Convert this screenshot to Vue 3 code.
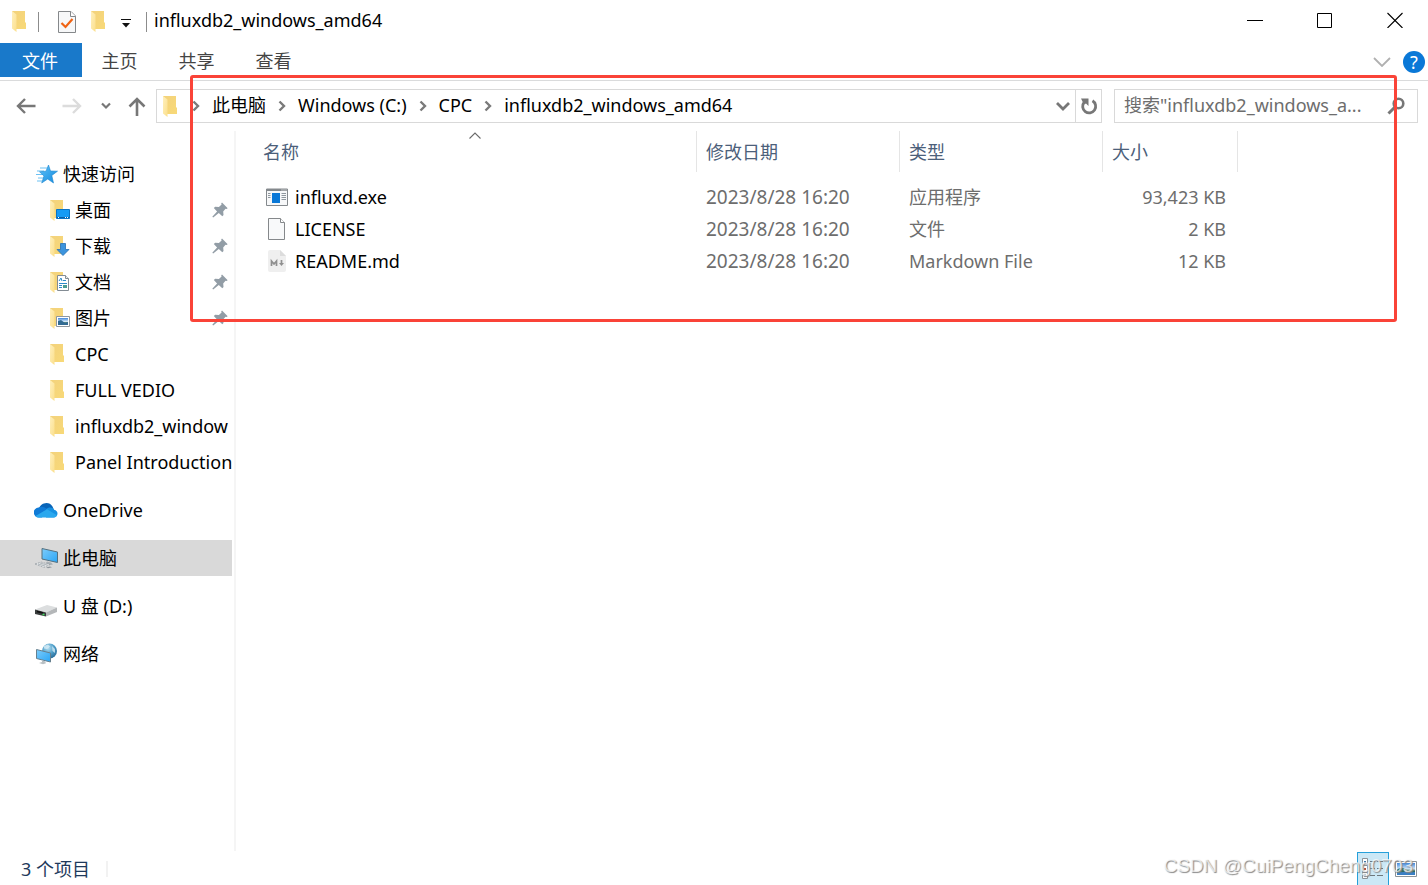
<script setup>
import { ref } from 'vue'

const tabs = ['主页', '共享', '查看']
const crumbs = ['此电脑', 'Windows (C:)', 'CPC', 'influxdb2_windows_amd64']
const quick = [
  { name: '桌面', badge: 'desktop', pinned: true },
  { name: '下载', badge: 'download', pinned: true },
  { name: '文档', badge: 'document', pinned: true },
  { name: '图片', badge: 'picture', pinned: true },
  { name: 'CPC' },
  { name: 'FULL VEDIO' },
  { name: 'influxdb2_window' },
  { name: 'Panel Introduction' }
]
const files = [
  { name: 'influxd.exe', icon: 'exe', date: '2023/8/28 16:20', type: '应用程序', size: '93,423 KB' },
  { name: 'LICENSE', icon: 'file', date: '2023/8/28 16:20', type: '文件', size: '2 KB' },
  { name: 'README.md', icon: 'md', date: '2023/8/28 16:20', type: 'Markdown File', size: '12 KB' }
]
const query = ref('')
</script>

<template>
  <div class="window">
    <svg class="defs" width="0" height="0" aria-hidden="true">
      <defs>
        <linearGradient id="foldBack" x1="0" y1="0" x2="1" y2="1">
          <stop offset="0" stop-color="#f3d27c" />
          <stop offset="1" stop-color="#f8d978" />
        </linearGradient>
        <linearGradient id="foldFront" x1="0" y1="0" x2="1" y2="1">
          <stop offset="0" stop-color="#fff0bd" />
          <stop offset="1" stop-color="#fbdf8c" />
        </linearGradient>
        <linearGradient id="blueScreen" x1="0" y1="0" x2="1" y2="1">
          <stop offset="0" stop-color="#7cccfb" />
          <stop offset="1" stop-color="#2aa5f5" />
        </linearGradient>
        <linearGradient id="starFill" x1="0" y1="0" x2="1" y2="1">
          <stop offset="0" stop-color="#5cc2fa" />
          <stop offset="1" stop-color="#1489dc" />
        </linearGradient>
        <radialGradient id="globeFill" cx="0.4" cy="0.3" r="0.8">
          <stop offset="0" stop-color="#b8e0f2" />
          <stop offset="0.5" stop-color="#4f9fc9" />
          <stop offset="1" stop-color="#1f5f8d" />
        </radialGradient>
        <linearGradient id="photoFill" x1="0" y1="0" x2="0" y2="1">
          <stop offset="0" stop-color="#3f86dc" />
          <stop offset="0.5" stop-color="#d4e8f8" />
          <stop offset="0.6" stop-color="#5f8b78" />
          <stop offset="1" stop-color="#3d78ab" />
        </linearGradient>
        <symbol id="folder" viewBox="0 0 14 21">
          <path d="M0 0h13v11l1 1v6H4L0 16z" fill="url(#foldBack)" />
          <path d="M0 0l4.500 3.500V21L0 17.500z" fill="url(#foldFront)" />
        </symbol>
        <symbol id="crumbArrow" viewBox="0 0 8 12">
          <path d="M1.500 1.500L6 6l-4.500 4.500" fill="none" stroke="#7a7a7a" stroke-width="2.400" />
        </symbol>
      </defs>
    </svg>

    <header class="titlebar">
      <svg class="tb-folder" width="14" height="21"><use href="#folder" /></svg>
      <span class="sep"></span>
      <button class="icon-btn tb-props" aria-label="属性">
        <svg width="18" height="22" viewBox="0 0 18 22">
          <path d="M.5.500h12.500l4.500 4.500v16.500H.5z" fill="#f7f8f9" stroke="#85888b" />
          <path d="M12.500.500v5h5" fill="#fff" stroke="#85888b" />
          <path d="M3.500 12l4 4L14.500 8" fill="none" stroke="#f06414" stroke-width="2.200" />
        </svg>
      </button>
      <button class="icon-btn tb-new" aria-label="新建文件夹">
        <svg width="14" height="21"><use href="#folder" /></svg>
      </button>
      <button class="icon-btn tb-more" aria-label="自定义快速访问工具栏">
        <svg width="10" height="9" viewBox="0 0 10 9">
          <path d="M0 .5h10" stroke="#111" />
          <path d="M1 4h8L5 8.500z" fill="#111" />
        </svg>
      </button>
      <span class="sep"></span>
      <h1 class="title">influxdb2_windows_amd64</h1>
      <div class="win-btns">
        <button class="win-btn" aria-label="最小化">
          <svg width="16" height="16"><path d="M0 8.500h16" stroke="#000" /></svg>
        </button>
        <button class="win-btn" aria-label="最大化">
          <svg width="16" height="16"><path d="M.5 1.500h14v14H.5z" fill="none" stroke="#000" /></svg>
        </button>
        <button class="win-btn close" aria-label="关闭">
          <svg width="16" height="16"><path d="M.5 1l15 15M15.500 1l-15 15" stroke="#000" stroke-width="1.100" /></svg>
        </button>
      </div>
    </header>

    <nav class="ribbon" aria-label="功能区">
      <button class="tab file">文件</button>
      <button v-for="t in tabs" :key="t" class="tab">{{ t }}</button>
      <button class="icon-btn expand" aria-label="展开功能区">
        <svg width="18" height="10" viewBox="0 0 18 10">
          <path d="M1 1l8 8 8-8" fill="none" stroke="#b0b0b0" stroke-width="1.800" />
        </svg>
      </button>
      <button class="help" aria-label="帮助">?</button>
    </nav>

    <div class="navbar">
      <button class="icon-btn nav-wide" aria-label="后退">
        <svg width="20" height="16" viewBox="0 0 20 16">
          <path d="M19.500 8H2M9 1L2 8l7 7" fill="none" stroke="#777" stroke-width="2.400" />
        </svg>
      </button>
      <button class="icon-btn nav-wide" aria-label="前进">
        <svg width="20" height="16" viewBox="0 0 20 16">
          <path d="M.5 8H18M11 1l7 7-7 7" fill="none" stroke="#dcdcdc" stroke-width="2.400" />
        </svg>
      </button>
      <button class="icon-btn nav-recent" aria-label="最近浏览的位置">
        <svg width="10" height="8" viewBox="0 0 10 8">
          <path d="M1 1.500l4 4 4-4" fill="none" stroke="#777" stroke-width="2.200" />
        </svg>
      </button>
      <button class="icon-btn nav-up" aria-label="上移">
        <svg width="18" height="19" viewBox="0 0 18 19">
          <path d="M9 19V2M1.500 9.500L9 2l7.500 7.500" fill="none" stroke="#777" stroke-width="2.600" />
        </svg>
      </button>
      <div class="address">
        <svg class="addr-folder" width="14" height="21"><use href="#folder" /></svg>
        <template v-for="c in crumbs" :key="c">
          <svg class="crumb-arrow" width="8" height="12"><use href="#crumbArrow" /></svg>
          <a class="crumb" href="#">{{ c }}</a>
        </template>
        <button class="icon-btn history" aria-label="以前的位置">
          <svg width="14" height="10" viewBox="0 0 14 10">
            <path d="M1 2L7 8l6-6" fill="none" stroke="#777" stroke-width="2.800" />
          </svg>
        </button>
        <button class="icon-btn refresh" aria-label="刷新">
          <svg width="18" height="18" viewBox="0 0 18 18">
            <path d="M12.500 3.800A6.500 6.500 0 1 1 4.200 5.200" fill="none" stroke="#777" stroke-width="2.800" />
            <path d="M1 1.500h7.500v7.500l-2.500-2.500L4 7.500z" fill="#777" />
          </svg>
        </button>
      </div>
      <form class="search" role="search" @submit.prevent>
        <input v-model="query" type="text" aria-label="搜索" placeholder="搜索&quot;influxdb2_windows_a..." />
        <button class="icon-btn" aria-label="开始搜索">
          <svg width="18" height="18" viewBox="0 0 18 18">
            <circle cx="11.500" cy="6.500" r="4.800" fill="none" stroke="#777" stroke-width="2.600" />
            <path d="M8 10L1.500 16.500" stroke="#777" stroke-width="3" />
          </svg>
        </button>
      </form>
    </div>

    <div class="body">
      <nav class="sidebar" aria-label="导航窗格">
        <a class="item top" href="#">
          <svg width="24" height="20" viewBox="0 0 24 20">
            <path d="M6 4h7M3 7h7M2 10.500h8M4 14h6M3 17h5" stroke="#6cc1f4" stroke-width="1.100" />
            <path d="M14.500 1l2 6 7 .2-5.700 4.300 1.700 7.500-5.800-4-6 4 2.300-7-4.500-4.200 6.500-.6z" fill="url(#starFill)" stroke="#1c86d0" stroke-width=".6" />
          </svg>
          <span>快速访问</span>
        </a>
        <a v-for="q in quick" :key="q.name" class="item sub" href="#">
          <svg width="22" height="21" viewBox="0 0 22 21">
            <path d="M0 0h13v11l1 1v6H4L0 16z" fill="url(#foldBack)" />
            <path d="M0 0l4.500 3.500V21L0 17.500z" fill="url(#foldFront)" />
            <g v-if="q.badge === 'desktop'">
              <path d="M6.500 9.500h13v9h-13z" fill="#169bf5" stroke="#0c74c4" />
              <path d="M7 17.500h12" stroke="#0a5ea6" />
              <path d="M8 17.500h1M15 17.500h1M17 17.500h1" stroke="#fff" />
            </g>
            <g v-else-if="q.badge === 'download'">
              <path d="M10.500 7.500h5v6h3.500L13 19.500 7 13.500h3.500z" fill="#3c94dd" stroke="#2670b4" stroke-width=".8" />
            </g>
            <g v-else-if="q.badge === 'document'">
              <path d="M7.500 3.500h8l3 3v12h-11z" fill="#fff" stroke="#838c94" />
              <path d="M15.500 3.500v3h3" fill="#eee" stroke="#838c94" />
              <path d="M9 9l2-3 1 3M13 8.500h3M9 11.500h8M9 13.500h3M9 15.500h3" fill="none" stroke="#2f8bc9" />
              <path d="M13 13h4v3h-4z" fill="#4b9c92" />
            </g>
            <g v-else-if="q.badge === 'picture'">
              <path d="M6.500 8.500h13v10h-13z" fill="#fff" stroke="#8f979e" />
              <path d="M8 10h10v7H8z" fill="url(#photoFill)" />
              <path d="M8 13l3-1 4 3 3-1v3H8z" fill="#326b93" />
            </g>
          </svg>
          <span class="label">{{ q.name }}</span>
          <svg v-if="q.pinned" class="pin" width="16" height="16" viewBox="0 0 16 16">
            <path d="M10 .5l5.700 5.700-1.200.8-1-.2-2.300 2.600.3 3.600-1.200 1.200-3.500-3.300L1.200 15.500.3 14.700l4.800-5.300L1.800 6l1.400-1.300 3.700.2L9.600 2.600 9.200 1.400z" fill="#929da6" />
          </svg>
        </a>
        <a class="item top spaced" href="#">
          <svg width="24" height="16" viewBox="0 0 24 16">
            <path d="M5 6.500A7.500 7.500 0 0 1 18.500 4.500L20 8 8 10z" fill="#0864b8" />
            <path d="M4.500 5.500C8 3.800 11 5.200 13 7L8 15.500H5A5 5 0 0 1 4.500 5.500z" fill="#0f7ad6" />
            <path d="M12 7.500c2.500-3 7-2.200 8 .2 5 .8 4.500 7.800-.5 7.800H12z" fill="#1791e2" />
            <path d="M1.500 14L13 7.200l10 6c-.8 1.500-2 2.300-3.500 2.300H5.500c-2 0-3-.5-4-1.500z" fill="#2aa8ee" />
          </svg>
          <span>OneDrive</span>
        </a>
        <a class="item top spaced selected" href="#" aria-current="true">
          <svg width="24" height="22" viewBox="0 0 24 22">
            <path d="M8 1.500L23.500 5v10.500L8 12z" fill="url(#blueScreen)" stroke="#55707f" stroke-width="1" />
            <path d="M13 14.500l4 1 2 2-4 .8-4-1z" fill="#a9b0b5" />
            <path d="M1 17l6-2 9 2.500-6 3z" fill="#e3e6e8" stroke="#929a9f" stroke-width=".7" stroke-dasharray="2 1" />
            <path d="M4 17l7 2M6 16l7 2" stroke="#9aa2a8" stroke-width=".7" />
            <path d="M12 20.500l4-1 2 .8-4 1z" fill="#8d959b" />
          </svg>
          <span>此电脑</span>
        </a>
        <a class="item top spaced" href="#">
          <svg class="low" width="24" height="14" viewBox="0 0 24 14">
            <path d="M1 6.500L13 2l10 2.500-11 5z" fill="#dcdedf" />
            <path d="M1 6.500l11 3v4L1 11z" fill="#3a3d3e" />
            <path d="M12 9.500L23 4.500V9l-11 4.500z" fill="#b4b7b9" />
            <path d="M3 8.500l6 1.500" stroke="#111" stroke-width="1.500" />
            <path d="M8.500 11.500h2" stroke="#3ee05c" stroke-width="1.500" />
          </svg>
          <span>U 盘 (D:)</span>
        </a>
        <a class="item top spaced" href="#">
          <svg width="24" height="22" viewBox="0 0 24 22">
            <circle cx="15.500" cy="8" r="7.500" fill="url(#globeFill)" />
            <path d="M10 3l4-1.500 2 2-3 2.500-3-.5zM18 3l3 3v4l-2.500-2z" fill="#d9eef7" opacity=".75" />
            <path d="M2.500 6.500l14 3.500v9l-14-3.500z" fill="url(#blueScreen)" stroke="#66808f" stroke-width="1" />
            <path d="M8 17.500l3 .8 1 2-3 1-4-1.200 3-1z" fill="#b9c0c4" />
          </svg>
          <span>网络</span>
        </a>
      </nav>

      <main class="content">
        <table class="files">
          <colgroup>
            <col class="c-name" /><col class="c-date" /><col class="c-type" /><col class="c-size" /><col />
          </colgroup>
          <thead>
            <tr>
              <th scope="col" aria-sort="ascending">
                名称
                <svg class="sort" width="12" height="7" viewBox="0 0 12 7">
                  <path d="M.5 6.500L6 1l5.500 5.500" fill="none" stroke="#6a6a6a" stroke-width="1.100" />
                </svg>
              </th>
              <th scope="col">修改日期</th>
              <th scope="col">类型</th>
              <th scope="col">大小</th>
              <td></td>
            </tr>
          </thead>
          <tbody>
            <tr v-for="f in files" :key="f.name">
              <td class="name">
                <div class="name-cell">
                  <svg width="22" height="22" viewBox="0 0 22 22">
                    <g v-if="f.icon === 'exe'">
                      <path d="M.5 3h21v16.500H.5z" fill="#f7f8f9" stroke="#84898d" />
                      <path d="M0 4h22" stroke="#84898d" stroke-width="2" />
                      <path d="M15.500 4h1M17.500 4h1M19.500 4h1" stroke="#fff" />
                      <path d="M6 7h8v10H6z" fill="#0a78d7" />
                      <path d="M2 7.500h2.500M2 9.500h2.500M2 11.500h2.500M15.500 7.500H20M15.500 9.500H20M15.500 11.500H20M15.500 13.500H20" stroke="#8f979e" />
                    </g>
                    <g v-else-if="f.icon === 'file'">
                      <path d="M2.500.500h12l4 4v17h-16z" fill="#f8f9fa" stroke="#85888b" />
                      <path d="M14.500.500v4h4" fill="#fff" stroke="#85888b" />
                    </g>
                    <g v-else>
                      <path d="M4 0h10l6 6v14q0 2-2 2H4q-2 0-2-2V2q0-2 2-2z" fill="#efefef" />
                      <path d="M14 0l6 6h-6z" fill="#dcdcdc" />
                      <path d="M5.500 16v-5l2.500 3 2.500-3v5M15.500 10v4" fill="none" stroke="#8f8f8f" stroke-width="1.700" />
                      <path d="M13 13h5l-2.500 3z" fill="#8f8f8f" />
                    </g>
                  </svg>
                  <span>{{ f.name }}</span>
                </div>
              </td>
              <td class="date">{{ f.date }}</td>
              <td>{{ f.type }}</td>
              <td class="size">{{ f.size }}</td>
              <td></td>
            </tr>
          </tbody>
        </table>
      </main>
    </div>

    <footer class="status">
      <span class="count">3 个项目</span>
      <span class="status-sep"></span>
      <button class="view active" aria-label="详细信息" aria-pressed="true">
        <svg width="22" height="22" viewBox="0 0 22 22">
          <path d="M.5.500h5v20h-5zM.5 7.500h5M.5 14.500h5" fill="#fff" stroke="#8b9297" />
          <path d="M2 4h2M2 17.500h2" stroke="#3f78a8" stroke-width="2" />
          <path d="M2 11h2" stroke="#b5533c" stroke-width="2" />
          <path d="M8 3.500h5M15 3.500h6M8 10.500h5M15 10.500h6M8 17.500h5M15 17.500h6" stroke="#6f777c" />
        </svg>
      </button>
      <button class="view" aria-label="大缩略图">
        <svg width="22" height="16" viewBox="0 0 22 16">
          <path d="M.5.500h21v15H.5z" fill="#fff" stroke="#8b9297" />
          <path d="M2 2h18v12H2z" fill="url(#photoFill)" />
          <path d="M2 9c3-3 6-3 9 0l9 1v2H2z" fill="#2f6a5c" />
          <path d="M2 12c6-2 12 0 18-1v3H2z" fill="#3a7fc4" />
        </svg>
      </button>
    </footer>

    <div class="highlight" aria-hidden="true"></div>
    <div class="watermark">CSDN @CuiPengCheng0703</div>
  </div>
</template>

<style>
html,
body {
  margin: 0;
  background: #fff;
}
</style>

<style scoped>
.window {
  position: relative;
  display: flex;
  flex-direction: column;
  height: 100vh;
  overflow: hidden;
  background: #fff;
  color: #000;
  font-family: "Noto Sans", "Noto Sans CJK SC", sans-serif;
  font-size: 18px;
  line-height: 24px;
}
.defs {
  position: absolute;
}
svg {
  display: block;
  flex: none;
}
button {
  padding: 0;
  border: 0;
  background: none;
  color: inherit;
  font: inherit;
}
a {
  color: inherit;
  text-decoration: none;
}
.icon-btn {
  display: flex;
  flex: none;
  align-items: center;
  justify-content: center;
}
.titlebar {
  display: flex;
  align-items: center;
  flex: none;
  height: 43px;
  padding-left: 12px;
}
.sep {
  width: 1px;
  height: 20px;
  margin-left: 12px;
  background: #8c8c8c;
}
.tb-props {
  margin-left: 19px;
}
.tb-new {
  margin-left: 15px;
}
.tb-more {
  margin-left: 16px;
  padding-top: 4px;
}
.tb-more + .sep {
  margin-left: 15px;
}
.title {
  flex: 1;
  margin: 0 0 0 7px;
  font-size: 18px;
  font-weight: 400;
  line-height: 40px;
  height: 43px;
}
.win-btns {
  display: flex;
  height: 40px;
  align-self: flex-start;
}
.win-btn {
  display: flex;
  align-items: center;
  justify-content: center;
  width: 70px;
}
.win-btn.close {
  box-sizing: border-box;
  width: 68px;
  padding-left: 2px;
}
.ribbon {
  display: flex;
  align-items: center;
  flex: none;
  height: 37px;
  padding-right: 3px;
  border-bottom: 1px solid #dadbdc;
  color: #444;
}
.tab {
  box-sizing: border-box;
  width: 77px;
  height: 34px;
  padding: 2px 2px 0 0;
  align-self: flex-start;
}
.tab.file {
  width: 82px;
  background: #1979ca;
  color: #fff;
}
.expand {
  margin-left: auto;
}
.help {
  width: 22px;
  height: 22px;
  margin-left: 12px;
  border-radius: 50%;
  background: #0a78d7;
  color: #fff;
  line-height: 20px;
}
.navbar {
  display: flex;
  align-items: center;
  flex: none;
  height: 50px;
  padding: 0 10px 0 3px;
}
.nav-wide {
  width: 46px;
}
.nav-recent {
  width: 22px;
}
.nav-up {
  width: 39px;
}
.address,
.search {
  box-sizing: border-box;
  display: flex;
  align-items: center;
  height: 34px;
  border: 1px solid #d9d9d9;
}
.address {
  flex: 1;
  padding-left: 6px;
}
.addr-folder {
  margin-right: 3px;
}
.crumb-arrow {
  margin: 0 12px;
}
.crumb {
  padding-bottom: 2px;
}
.history {
  margin-left: auto;
  width: 24px;
}
.refresh {
  width: 26px;
  height: 32px;
  border-left: 1px solid #d9d9d9;
}
.search {
  width: 304px;
  margin-left: 12px;
  padding: 0 12px 0 9px;
}
.search input {
  flex: 1;
  min-width: 0;
  padding: 0 0 2px;
  border: 0;
  outline: 0;
  background: none;
  font: inherit;
}
.search input::placeholder {
  color: #6d6d6d;
  opacity: 1;
}
.body {
  display: flex;
  flex: 1;
  min-height: 0;
}
.sidebar {
  box-sizing: border-box;
  flex: none;
  width: 236px;
  padding: 25px 2px 0 0;
  border-right: 2px solid #f5f5f5;
}
.item {
  display: flex;
  align-items: center;
  height: 36px;
  white-space: nowrap;
}
.item.top {
  padding-left: 34px;
  gap: 5px;
}
.item.sub {
  padding-left: 50px;
  gap: 3px;
}
.item.spaced {
  margin-top: 12px;
}
.item.selected {
  background: #d9d9d9;
}
.low {
  margin-top: 8px;
}
.label {
  flex: 1;
}
.pin {
  margin-right: 4px;
}
.content {
  flex: 1;
  min-width: 0;
}
.files {
  width: 100%;
  border-collapse: separate;
  border-spacing: 0;
  table-layout: fixed;
}
.c-name {
  width: 461px;
}
.c-date,
.c-type {
  width: 203px;
}
.c-size {
  width: 135px;
}
.files th {
  position: relative;
  height: 41px;
  padding: 0 0 0 9px;
  box-sizing: border-box;
  border-right: 1px solid #e5e5e5;
  color: #4c607a;
  font-weight: 400;
  text-align: left;
}
.files th:first-child {
  padding-left: 27px;
}
.sort {
  position: absolute;
  top: 1px;
  left: 50%;
  margin-left: 3px;
}
.files td {
  height: 32px;
  padding: 0 0 0 9px;
  color: #6d6d6d;
}
.files tbody::before {
  content: "";
  display: block;
  height: 9px;
}
.files td.name {
  padding-left: 30px;
  color: #000;
}
.name-cell {
  display: flex;
  align-items: center;
  gap: 7px;
}
.files td.date {
  font-size: 19px;
}
.files td.size {
  padding: 0 12px 0 0;
  text-align: right;
}
.status {
  display: flex;
  align-items: center;
  flex: none;
  height: 33px;
  margin-top: 1px;
  padding: 0 5px 0 21px;
  color: #1e395b;
}
.status-sep {
  width: 2px;
  height: 16px;
  margin: 0 auto 0 16px;
  background: #f2f2f2;
}
.view {
  display: flex;
  align-items: center;
  justify-content: center;
  width: 34px;
  height: 33px;
}
.view.active {
  box-sizing: border-box;
  width: 32px;
  border: 1px solid #26a0da;
  border-bottom: 0;
  background: #cbe8f6;
}
.highlight {
  position: absolute;
  top: 75px;
  right: 31px;
  left: 190px;
  box-sizing: border-box;
  height: 247px;
  border: 3px solid #fa4338;
  border-radius: 3px;
  pointer-events: none;
}
.watermark {
  position: absolute;
  right: 15px;
  bottom: 7px;
  color: rgba(255, 255, 255, 0.7);
  font-family: "Liberation Sans", sans-serif;
  font-size: 19px;
  text-shadow: 1px 1px 1px #888;
  pointer-events: none;
}
</style>
